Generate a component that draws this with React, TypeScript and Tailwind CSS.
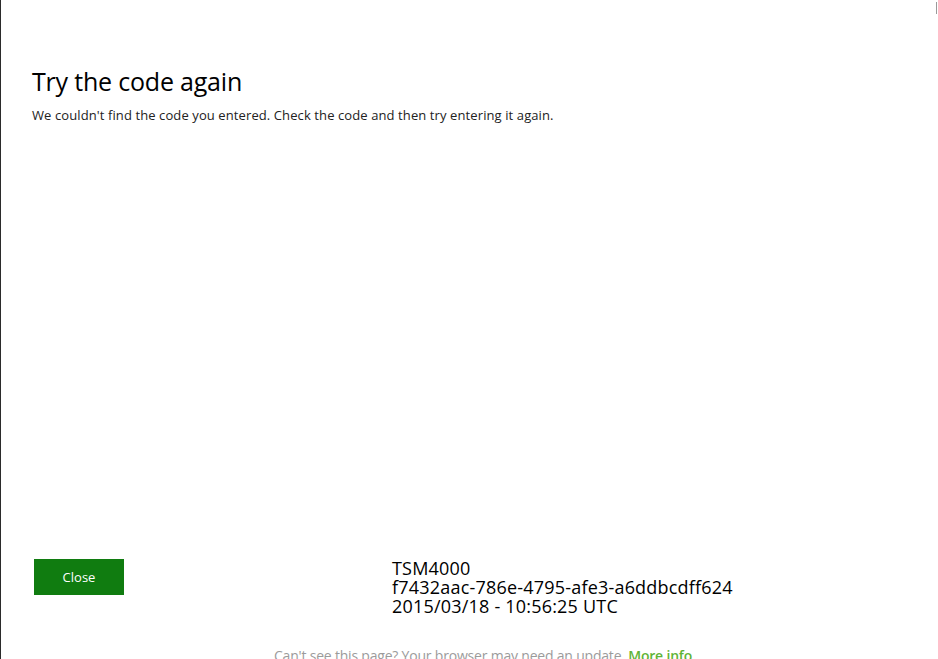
import React from 'react';

const errorDetails = ['TSM4000', 'f7432aac-786e-4795-afe3-a6ddbcdff624', '2015/03/18 - 10:56:25 UTC'];

export default function App() {
  const handleClose = () => {
    console.log('close');
  };

  return (
    <div
      className="relative h-[659px] w-[938px] overflow-hidden bg-white border-l border-[#2b2b2b] flex flex-col"
      style={{ fontFamily: '"Open Sans", "Noto Sans", sans-serif' }}
    >
      {/* stray scrollbar edge in the top right corner */}
      <div className="absolute right-[1px] top-[2px] h-[12px] w-px bg-[#9a9a9a]" />

      <div className="pl-[31px] pt-[63px]">
        <h1 className="text-[25px] leading-[36px] font-normal text-black tracking-[-0.2px]">
          Try the code again
        </h1>
        <p className="mt-[8px] text-[13px] leading-[17px] text-[#222] tracking-[0.1px]">
          We couldn't find the code you entered. Check the code and then try entering it again.
        </p>
      </div>

      <div className="flex-1" />

      <div className="flex items-start pl-[33px]">
        <button
          onClick={handleClose}
          className="mt-[3px] h-[36px] w-[90px] bg-[#107c10] text-white text-[13px] leading-none"
        >
          Close
        </button>
        <div className="ml-[268px] mt-[3px] text-[18px] leading-[19px] text-black tracking-[0.2px]">
          {errorDetails.map(line => (
            <div key={line}>{line}</div>
          ))}
        </div>
      </div>

      <p className="mt-[30px] h-[13px] pl-[273px] text-[14px] leading-[20px] text-[#9b9b9b] tracking-[-0.2px]">
        Can't see this page? Your browser may need an update.{' '}
        <a href="#" className="font-semibold text-[#5fb336]">More info</a>
      </p>
    </div>
  );
}
